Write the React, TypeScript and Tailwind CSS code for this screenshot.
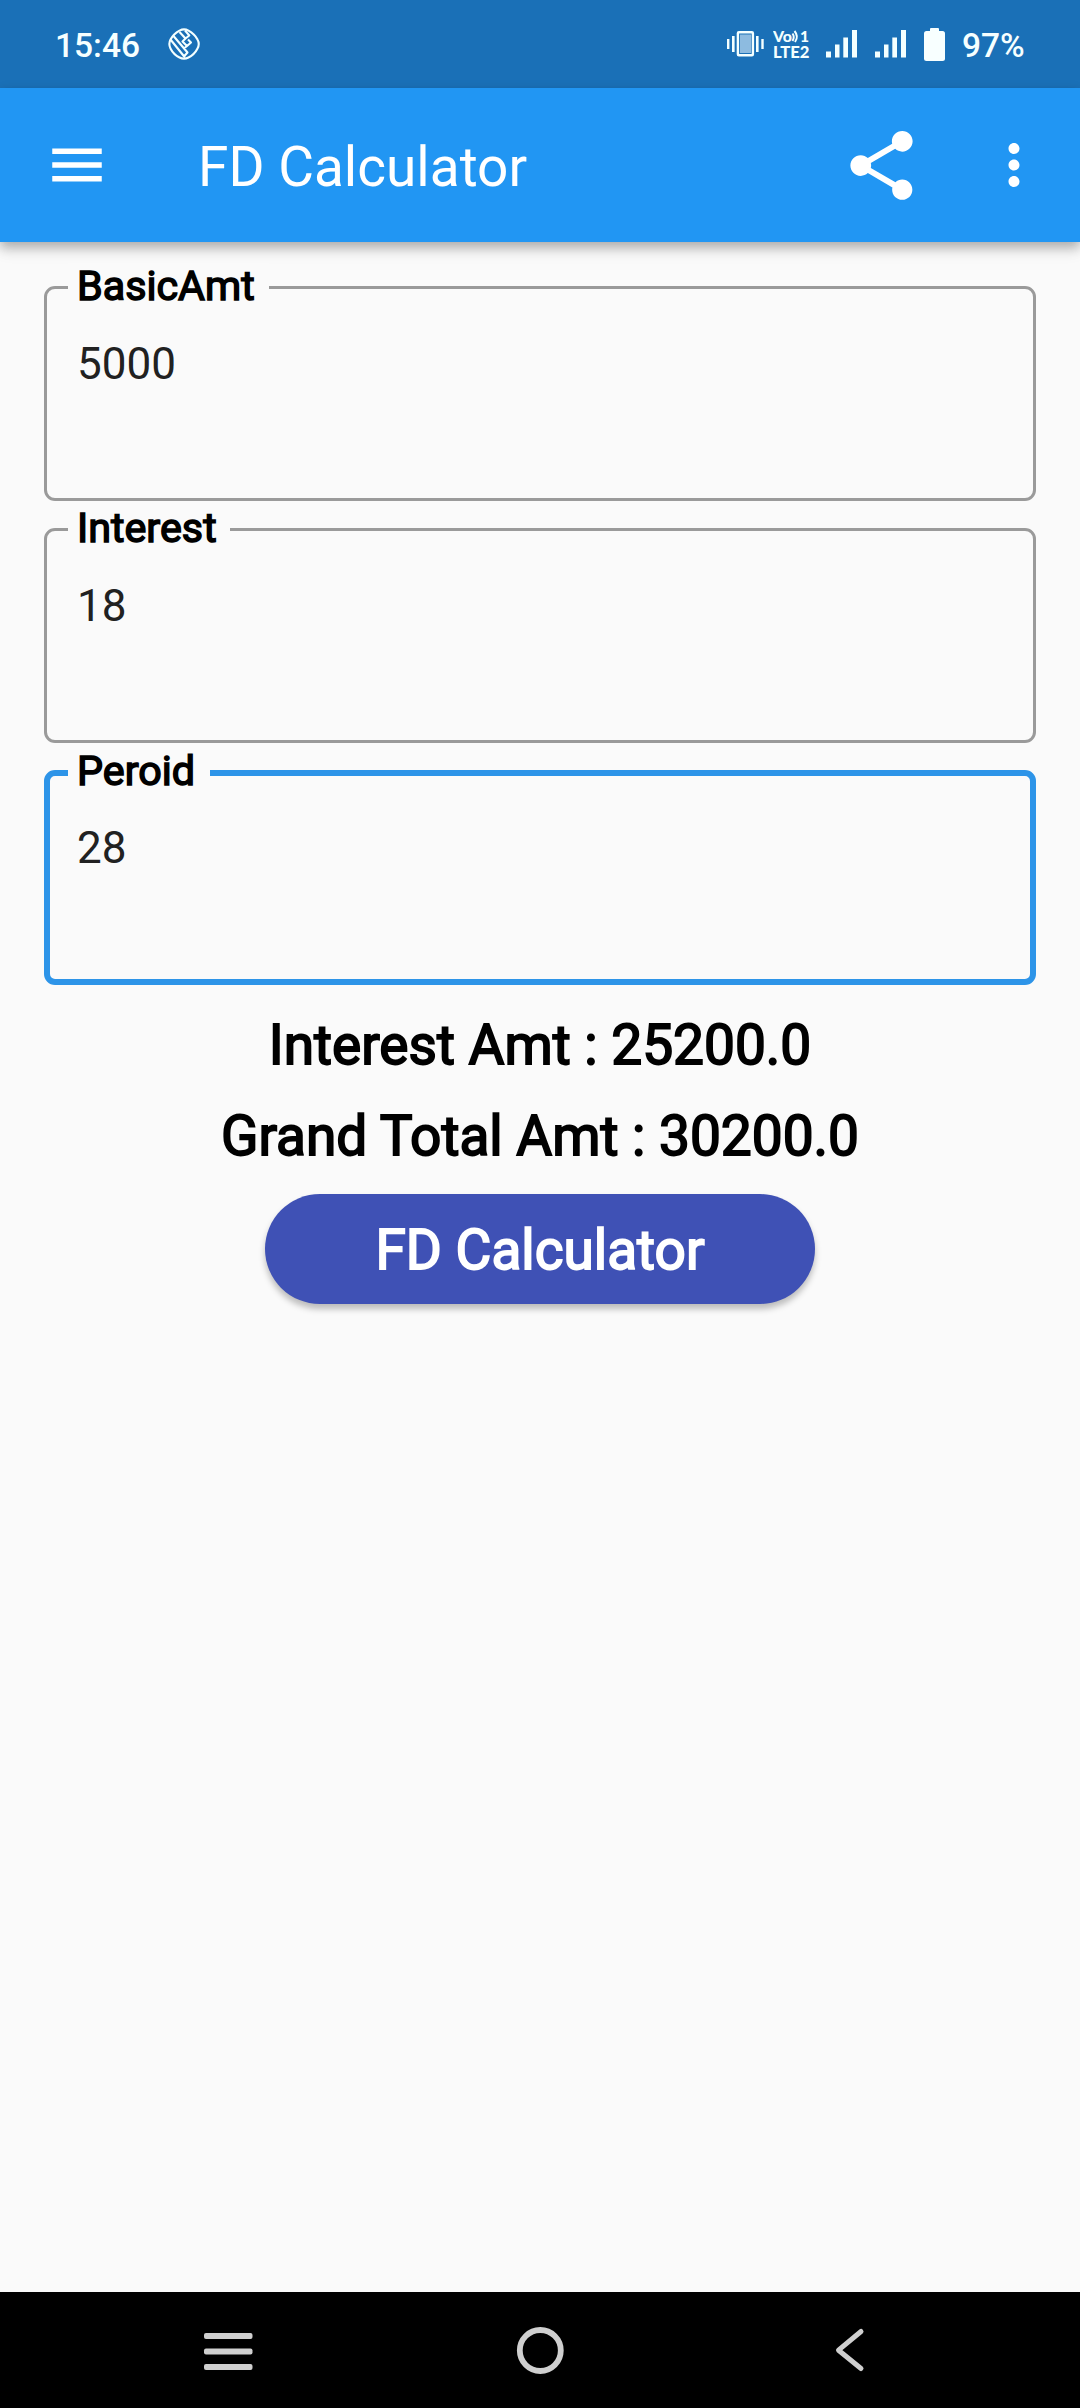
import { MdMenu, MdMoreVert, MdShare } from "react-icons/md";

function TaxiBadge() {
  return (
    <svg className="ml-[29px] h-8 w-8" viewBox="0 0 32 32" fill="none" stroke="#f4ffff" strokeWidth="2.1" strokeLinejoin="round">
      <path d="M11.5 2.600Q16 .2 20.500 2.600Q26.500 5.800 29.500 11.500Q32 16 29.500 20.500Q26.500 26.500 20.500 29.500Q16 31.800 11.500 29.500Q5.500 26.500 2.500 20.500Q.2 16 2.500 11.500Q5.500 5.800 11.500 2.600Z" />
      <path d="M2.500 11.500L17 29.500M5.500 8L19.500 24.500L15.500 29M11.500 4L17.500 10.500L21.300 7.500L17 2.500M17.500 10.500L14.500 13.500L19 18L23 14.500L20 11.500M19 18L15.800 20.500" />
    </svg>
  );
}

function Vibrate() {
  return (
    <svg className="h-[26px] w-[37px]" viewBox="0 0 37 26" fill="#f4ffff">
      <rect x="0" y="8" width="2.400" height="10" />
      <rect x="5" y="5" width="2.600" height="16" />
      <rect x="29" y="5" width="2.600" height="16" />
      <rect x="34.300" y="8" width="2.400" height="10" />
      <rect x="10.900" y="1.200" width="15" height="23" rx="1" fill="none" stroke="#f4ffff" strokeWidth="2.400" />
      <rect x="13" y="3.500" width="11" height="18.500" fill="#8dbbe0" />
    </svg>
  );
}

function VoLte() {
  return (
    <svg className="ml-[9px] h-[44px] w-[37px]" viewBox="0 -7 37 44" fill="#f4ffff" fontFamily="Lato, sans-serif" fontWeight="900">
      <text x="0" y="12.500" fontSize="14.500" textLength="19" lengthAdjust="spacingAndGlyphs">Vo</text>
      <text x="27" y="12.500" fontSize="15.500" textLength="9" lengthAdjust="spacingAndGlyphs">1</text>
      <path d="M19.500 4.500Q22 8 19.500 12M21.500 2Q26 7.500 22 13" fill="none" stroke="#f4ffff" strokeWidth="2" />
      <text x="0" y="28.500" fontSize="16.500" textLength="36.500" lengthAdjust="spacingAndGlyphs">LTE2</text>
    </svg>
  );
}

function Signal({ className }: { className: string }) {
  return (
    <svg className={"h-7 w-[31px] " + className} viewBox="0 0 31 28" fill="#f4ffff">
      <rect x="0" y="21.500" width="5" height="6" />
      <rect x="9" y="14.500" width="4.500" height="13" />
      <rect x="17.300" y="7.500" width="4.700" height="20" />
      <rect x="26" y="0" width="5" height="27.500" />
    </svg>
  );
}

function Battery() {
  return (
    <svg className="ml-[18px] h-[33px] w-[21px]" viewBox="0 0 21 33" fill="#f8ffff">
      <rect x="6" y="0" width="9" height="5" rx="1" />
      <rect x="0" y="3" width="21" height="30" rx="2.500" />
    </svg>
  );
}

function StatusBar() {
  return (
    <div className="flex h-[88px] items-center bg-[#1a70b7] pr-[57px] pl-[55px] text-[33.5px] font-medium text-[#f6ffff]">
      <span className="w-[84px] whitespace-nowrap pt-[3px] leading-none">15:46</span>
      <TaxiBadge />
      <div className="ml-auto flex items-center">
        <Vibrate />
        <VoLte />
        <Signal className="ml-[16px]" />
        <Signal className="ml-[18px]" />
        <Battery />
        <span className="ml-[17px] w-[61px] whitespace-nowrap pt-[3px] leading-none">97%</span>
      </div>
    </div>
  );
}

function AppBar() {
  return (
    <header className="relative flex h-[154px] items-center bg-[#2196f3] pr-[33px] pl-11 text-white shadow-[0_5px_11px_rgba(0,0,0,0.27),0_10px_14px_rgba(0,0,0,0.07)]">
      <MdMenu className="size-[66px]" />
      <h1 className="ml-[88px] pt-[5px] text-[55px] leading-none tracking-normal">FD Calculator</h1>
      <MdShare className="ml-auto size-[83px]" />
      <MdMoreVert className="ml-[58px] size-[66px]" />
    </header>
  );
}

type FieldProps = { label: string; value: string; notch: string; focused?: boolean };

function Field({ label, value, notch, focused }: FieldProps) {
  return (
    <div
      className={
        "relative h-[215px] rounded-[11px] " +
        (focused ? "border-[6px] border-[#2d94e8] px-[27px] pt-[46px]" : "border-[3px] border-[#9a9a9a] px-[30px] pt-[49px]")
      }
    >
      <span
        className={
          "absolute flex h-12 items-center whitespace-nowrap bg-[#fafafa] pl-[9px] text-[41.25px] leading-none text-black [-webkit-text-stroke:1.5px_black] " +
          (focused ? "-top-[28px] left-[18px] " : "-top-[26px] left-[21px] ") +
          notch
        }
      >
        {label}
      </span>
      <span className="block text-[44px] leading-[52px] text-[#212121]">{value}</span>
    </div>
  );
}

function NavBar() {
  return (
    <nav className="flex h-[116px] items-center justify-between bg-black pr-[214px] pl-[203px]">
      <svg className="h-[50px] w-[50px]" viewBox="0 0 50 50" fill="#cfcfcf">
        <rect x="1" y="8" width="48.500" height="6" rx="2" />
        <rect x="1" y="23.500" width="48.500" height="6" rx="2" />
        <rect x="1" y="39" width="48.500" height="6" rx="2" />
      </svg>
      <svg className="mr-[7px] h-[50px] w-[50px]" viewBox="0 0 50 50" fill="none" stroke="#cfcfcf" strokeWidth="5.800">
        <circle cx="25.300" cy="25.500" r="20.500" />
      </svg>
      <svg className="h-[50px] w-[32px]" viewBox="0 0 32 50" fill="none" stroke="#cfcfcf" strokeWidth="5" strokeLinecap="round" strokeLinejoin="round">
        <path d="M27 6.500L4.500 25.200L27 43.500" />
      </svg>
    </nav>
  );
}

export default function App() {
  return (
    <div className="flex h-[2408px] w-[1080px] flex-col bg-[#fafafa] font-[Roboto,sans-serif]">
      <StatusBar />
      <AppBar />
      <main className="flex flex-1 flex-col px-11 pt-11">
        <div className="flex flex-col gap-[27px]">
          <Field label="BasicAmt" value="5000" notch="w-[201px]" />
          <Field label="Interest" value="18" notch="w-[162px]" />
          <Field label="Peroid" value="28" notch="w-[142px]" focused />
        </div>
        <div className="flex flex-col items-center pt-[28px] text-[55px] text-black [-webkit-text-stroke:1.8px_black]">
          <p className="leading-[64px]">Interest Amt : 25200.0</p>
          <p className="mt-[27px] leading-[64px]">Grand Total Amt : 30200.0</p>
        </div>
        <button className="mt-[26px] flex h-[110px] w-[550px] items-center justify-center self-center rounded-full bg-[#3f51b5] pt-[3px] text-[55px] leading-none text-white shadow-[0_5px_6px_rgba(0,0,0,0.25)] [-webkit-text-stroke:1.8px_white]">
          FD Calculator
        </button>
      </main>
      <NavBar />
    </div>
  );
}
